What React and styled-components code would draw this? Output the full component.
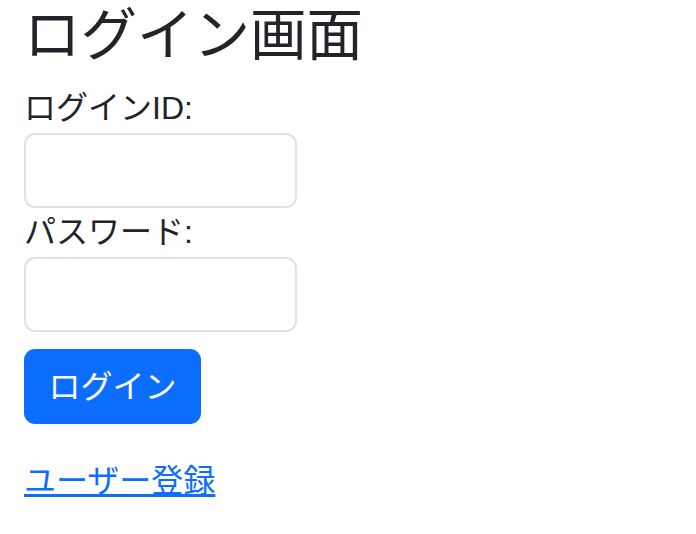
import React from 'react';
import styled, { createGlobalStyle } from 'styled-components';

const GlobalStyle = createGlobalStyle`
  html, body {
    margin: 0;
    padding: 0;
    background: #fff;
  }
  body {
    font-family: "Liberation Sans", "Noto Sans CJK JP", sans-serif;
    font-size: 32px;
    line-height: 1.5;
    color: #212529;
  }
`;

const Container = styled.div`
  padding: 0 24px;
`;

const Heading = styled.h1`
  margin: 0 0 12px;
  font-size: 56.5px;
  font-weight: 400;
  line-height: 72px;
`;

const Form = styled.form`
  display: flex;
  flex-direction: column;
  align-items: flex-start;
`;

const Label = styled.label`
  display: block;
  font-size: 32px;
  line-height: 49px;
`;

const Input = styled.input`
  box-sizing: border-box;
  width: 273px;
  height: 75px;
  padding: 12px 24px;
  font: inherit;
  color: #212529;
  background: #fff;
  border: 2px solid #dee2e6;
  border-radius: 11px;
  outline: none;
`;

const Button = styled.button`
  box-sizing: border-box;
  margin-top: 17px;
  height: 75px;
  padding: 0 22.5px;
  font: inherit;
  color: #fff;
  background: #0d6efd;
  border: 2px solid #0d6efd;
  border-radius: 11px;
  cursor: pointer;
`;

const Footer = styled.p`
  margin: 33px 0 0;
  line-height: 48px;
`;

const Link = styled.a`
  color: #0d6efd;
  text-decoration: underline;
`;

export default function App() {
  return (
    <>
      <GlobalStyle />
      <Container>
        <Heading>ログイン画面</Heading>
        <Form onSubmit={e => e.preventDefault()}>
          <Label htmlFor="loginId">ログインID:</Label>
          <Input id="loginId" type="text" />
          <Label htmlFor="password">パスワード:</Label>
          <Input id="password" type="password" />
          <Button type="submit">ログイン</Button>
        </Form>
        <Footer>
          <Link href="#">ユーザー登録</Link>
        </Footer>
      </Container>
    </>
  );
}
